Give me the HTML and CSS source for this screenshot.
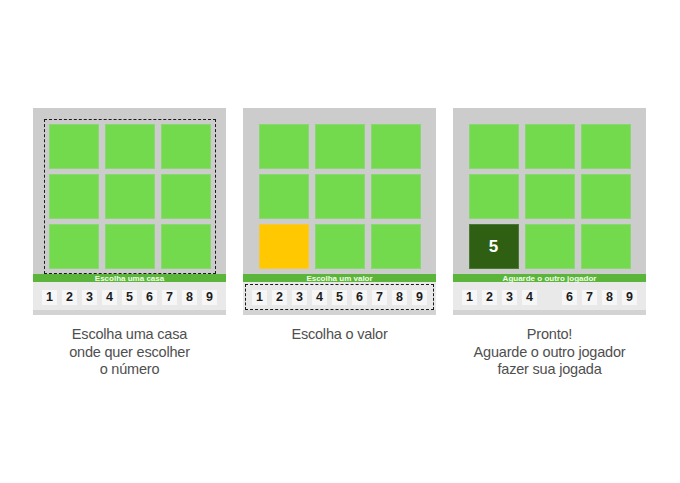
FILE: index.html
```html
<!DOCTYPE html>
<html lang="pt">
<head>
    <meta charset="UTF-8">
    <meta name="viewport" content="width=device-width, initial-scale=1.0">
    <title>Como jogar</title>
    <link rel="stylesheet" href="styles.css">
</head>
<body>
    <div class="steps">
        <!-- Passo 1: escolher a casa -->
        <div class="step">
            <div class="board">
                <div class="grid-wrap marked">
                    <div class="grid">
                        <div class="cell"></div><div class="cell"></div><div class="cell"></div>
                        <div class="cell"></div><div class="cell"></div><div class="cell"></div>
                        <div class="cell"></div><div class="cell"></div><div class="cell"></div>
                    </div>
                </div>
                <div class="status">Escolha uma casa</div>
                <div class="numbers">
                    <span class="num">1</span><span class="num">2</span><span class="num">3</span>
                    <span class="num">4</span><span class="num">5</span><span class="num">6</span>
                    <span class="num">7</span><span class="num">8</span><span class="num">9</span>
                </div>
                <div class="footer"></div>
            </div>
            <p class="caption">Escolha uma casa<br>onde quer escolher<br>o número</p>
        </div>

        <!-- Passo 2: escolher o valor -->
        <div class="step">
            <div class="board">
                <div class="grid-wrap">
                    <div class="grid">
                        <div class="cell"></div><div class="cell"></div><div class="cell"></div>
                        <div class="cell"></div><div class="cell"></div><div class="cell"></div>
                        <div class="cell selected"></div><div class="cell"></div><div class="cell"></div>
                    </div>
                </div>
                <div class="status">Escolha um valor</div>
                <div class="numbers marked">
                    <span class="num">1</span><span class="num">2</span><span class="num">3</span>
                    <span class="num">4</span><span class="num">5</span><span class="num">6</span>
                    <span class="num">7</span><span class="num">8</span><span class="num">9</span>
                </div>
                <div class="footer"></div>
            </div>
            <p class="caption">Escolha o valor</p>
        </div>

        <!-- Passo 3: aguardar -->
        <div class="step">
            <div class="board">
                <div class="grid-wrap">
                    <div class="grid">
                        <div class="cell"></div><div class="cell"></div><div class="cell"></div>
                        <div class="cell"></div><div class="cell"></div><div class="cell"></div>
                        <div class="cell filled">5</div><div class="cell"></div><div class="cell"></div>
                    </div>
                </div>
                <div class="status">Aguarde o outro jogador</div>
                <div class="numbers">
                    <span class="num">1</span><span class="num">2</span><span class="num">3</span>
                    <span class="num">4</span><span class="num used">5</span><span class="num">6</span>
                    <span class="num">7</span><span class="num">8</span><span class="num">9</span>
                </div>
                <div class="footer"></div>
            </div>
            <p class="caption">Pronto!<br>Aguarde o outro jogador<br>fazer sua jogada</p>
        </div>
    </div>
</body>
</html>
```

FILE: styles.css
```css
body {
    margin: 0;
    background-color: #fff;
    font-family: "Liberation Sans", Arial, sans-serif;
}

.steps {
    display: flex;
    gap: 17px;
    padding: 108px 0 0 33px;
}

.step {
    width: 193px;
}

.board {
    background-color: #cccccc;
    padding-top: 11px;
}

.grid-wrap {
    width: fit-content;
    margin: 0 auto;
    padding: 4px;
    border: 1px dashed transparent;
}

.grid-wrap.marked,
.numbers.marked {
    border-color: #1a1a1a;
}

.grid {
    display: grid;
    grid-template-columns: repeat(3, 50px);
    grid-auto-rows: 45px;
    column-gap: 6px;
    row-gap: 5px;
}

.cell {
    box-sizing: border-box;
    background-color: #73d94d;
    border: 1px solid #8ad873;
}

.cell.selected {
    background-color: #ffc800;
    border-color: #f5c93a;
}

.cell.filled {
    background-color: #2f5f12;
    border-color: #4a7a33;
    color: #fff;
    font-weight: bold;
    font-size: 17px;
    display: flex;
    align-items: center;
    justify-content: center;
}

.status {
    height: 10px;
    line-height: 9px;
    background-color: #5cb53b;
    color: #f2fbe9;
    font-size: 8px;
    font-weight: bold;
    text-align: center;
}

.numbers {
    box-sizing: border-box;
    height: 26px;
    margin: 0 2px;
    border: 1px dashed transparent;
    display: flex;
    align-items: center;
    justify-content: center;
    gap: 5px;
    background-color: #e9e9e9;
}

.board .numbers {
    box-shadow: 0 0 0 2px #e9e9e9;
}

.num {
    width: 15px;
    height: 15px;
    line-height: 15px;
    background-color: #f6f6f6;
    color: #1c1c1c;
    font-size: 12.5px;
    font-weight: bold;
    text-align: center;
}

.num.used {
    visibility: hidden;
}

.footer {
    height: 5px;
    background-color: #d3d3d3;
}

.caption {
    margin: 11px 0 0;
    color: #4f4f4f;
    font-size: 14.5px;
    line-height: 17.5px;
    letter-spacing: -0.2px;
    text-align: center;
}
```
